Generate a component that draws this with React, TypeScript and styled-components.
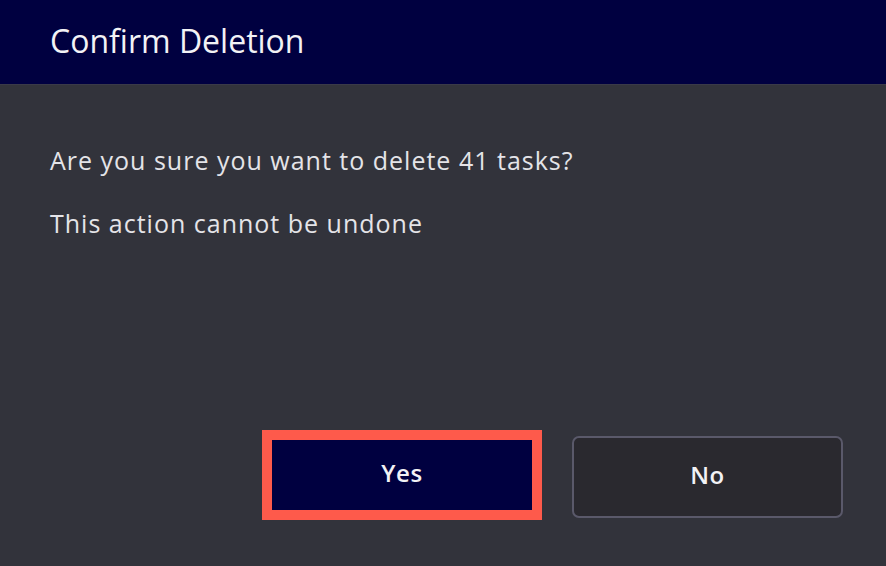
import React from "react";
import styled, { createGlobalStyle } from "styled-components";

const Global = createGlobalStyle`
  html, body { margin: 0; padding: 0; background: #32333b; }
  body { font-family: "Open Sans", "Noto Sans", sans-serif; }
  * { box-sizing: border-box; }
`;

const Dialog = styled.div`
  width: 886px;
  height: 566px;
  display: flex;
  flex-direction: column;
  background: #32333b;
  overflow: hidden;
`;

const Header = styled.div`
  height: 85px;
  flex: none;
  display: flex;
  align-items: center;
  padding: 0 0 4px 50px;
  background: #000040;
  border-bottom: 1px solid #3a3a48;
`;

const Title = styled.h1`
  margin: 0;
  font-size: 32px;
  font-weight: 400;
  color: #f2f2f5;
`;

const Body = styled.div`
  flex: 1;
  display: flex;
  flex-direction: column;
  padding: 58px 43px 46px 50px;
`;

const Message = styled.p`
  margin: 0 0 28px;
  font-size: 25px;
  line-height: 35px;
  letter-spacing: 1px;
  color: #e4e4e8;
`;

const Actions = styled.div`
  margin-top: auto;
  display: flex;
  justify-content: flex-end;
  align-items: flex-end;
  gap: 30px;
`;

const Button = styled.button<{ $primary?: boolean }>`
  font-family: "Open Sans", "Noto Sans", sans-serif;
  font-size: 24px;
  font-weight: 600;
  letter-spacing: 0.6px;
  color: #f2f2f5;
  cursor: pointer;
  display: flex;
  align-items: center;
  justify-content: center;
  width: ${(p) => (p.$primary ? "280px" : "271px")};
  height: ${(p) => (p.$primary ? "90px" : "82px")};
  margin-bottom: ${(p) => (p.$primary ? "0" : "2px")};
  background: ${(p) => (p.$primary ? "#000040" : "#2a292f")};
  border: ${(p) => (p.$primary ? "10px solid #fe5a4b" : "2px solid #5a596a")};
  border-radius: ${(p) => (p.$primary ? "0" : "7px")};
  padding: 0 0 5px;
`;

export default function App() {
  return (
    <>
      <Global />
      <Dialog>
        <Header>
          <Title>Confirm Deletion</Title>
        </Header>
        <Body>
          <Message>Are you sure you want to delete 41 tasks?</Message>
          <Message>This action cannot be undone</Message>
          <Actions>
            <Button $primary>Yes</Button>
            <Button>No</Button>
          </Actions>
        </Body>
      </Dialog>
    </>
  );
}
